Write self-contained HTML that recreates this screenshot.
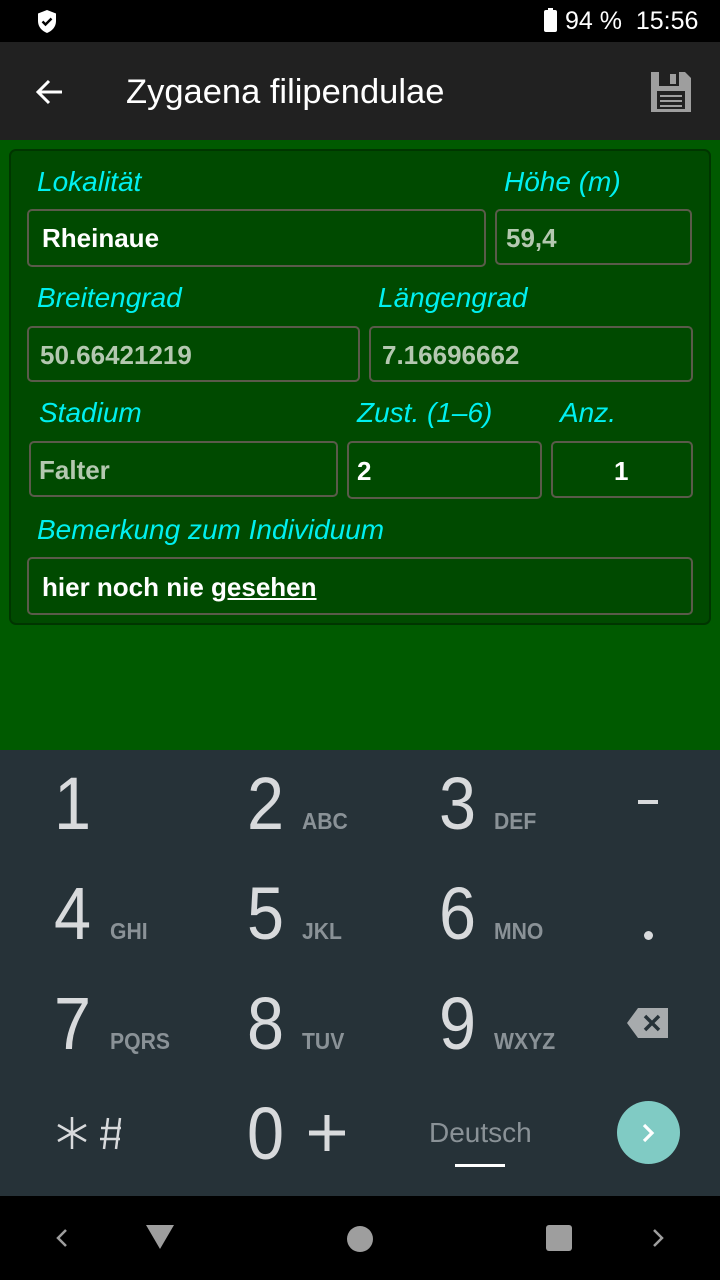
<!DOCTYPE html>
<html><head><meta charset="utf-8"><style>
*{margin:0;padding:0;box-sizing:border-box}
body{width:720px;height:1280px;position:relative;overflow:hidden;background:#005a00;font-family:"Liberation Sans",sans-serif}
.a{position:absolute;line-height:1;white-space:nowrap}
.lab{color:#00f0f0;font-style:italic;font-size:28px}
.box{position:absolute;border:2px solid #5a5a4a;border-radius:5px;background:#004a00}
.val{font-weight:bold;font-size:26px;color:#fff}
.g{color:#b4c8b0}
.d{color:#d8dadc;font-size:74px;transform-origin:left;transform:scaleX(.9)}
.l{color:#8a9297;font-size:23px;font-weight:bold;transform-origin:left;transform:scaleX(.92)}
</style></head><body>
<div class="a" style="left:0;top:0;width:720px;height:42px;background:#000"></div>
<svg class="a" style="left:36px;top:9px" width="22" height="25" viewBox="0 0 22 25"><path d="M11 1L2 4.5V12c0 6 4 10 9 12 5-2 9-6 9-12V4.5z" fill="#fff"/><path d="M6.5 12.5l3 3 6-6" stroke="#000" stroke-width="2.4" fill="none"/></svg>
<div class="a" style="left:544px;top:10px;width:13px;height:22px;background:#fff;border-radius:2px"></div>
<div class="a" style="left:548px;top:8px;width:5px;height:3px;background:#fff"></div>
<div class="a" style="left:565px;top:9px;color:#fff;font-size:25px">94 %&nbsp; 15:56</div>
<div class="a" style="left:0;top:42px;width:720px;height:98px;background:#212121"></div>
<svg class="a" style="left:34px;top:78px" width="30" height="28" viewBox="0 0 30 28"><path d="M28 14H4M15 3L4 14l11 11" stroke="#fff" stroke-width="3" fill="none"/></svg>
<div class="a" style="left:126px;top:75px;color:#fff;font-size:34.5px">Zygaena filipendulae</div>
<svg class="a" style="left:650px;top:71px" width="42" height="42" viewBox="0 0 42 42"><path d="M1 1h34l6 6v34H1z" fill="#9e9e9e"/><rect x="9" y="1" width="20" height="14" fill="#212121"/><rect x="20" y="3" width="6" height="10" fill="#9e9e9e"/><rect x="7" y="20" width="28" height="18" fill="#212121"/><path d="M10 25h22M10 30h22M10 35h22" stroke="#9e9e9e" stroke-width="2"/></svg>
<div class="a" style="left:9px;top:149px;width:702px;height:476px;background:#004a00;border:2px solid #003500;border-radius:7px"></div>
<div class="a lab" style="left:37px;top:168px">Lokalität</div>
<div class="a lab" style="left:504px;top:168px">Höhe (m)</div>
<div class="box" style="left:27px;top:209px;width:459px;height:58px"></div>
<div class="box" style="left:495px;top:209px;width:197px;height:56px"></div>
<div class="a val" style="left:42px;top:225px">Rheinaue</div>
<div class="a val g" style="left:506px;top:225px">59,4</div>
<div class="a lab" style="left:37px;top:284px">Breitengrad</div>
<div class="a lab" style="left:378px;top:284px">Längengrad</div>
<div class="box" style="left:27px;top:326px;width:333px;height:56px"></div>
<div class="box" style="left:369px;top:326px;width:324px;height:56px"></div>
<div class="a val g" style="left:40px;top:342px">50.66421219</div>
<div class="a val g" style="left:382px;top:342px">7.16696662</div>
<div class="a lab" style="left:39px;top:399px">Stadium</div>
<div class="a lab" style="left:357px;top:399px">Zust. (1–6)</div>
<div class="a lab" style="left:560px;top:399px">Anz.</div>
<div class="box" style="left:29px;top:441px;width:309px;height:56px"></div>
<div class="box" style="left:347px;top:441px;width:195px;height:58px"></div>
<div class="box" style="left:551px;top:441px;width:142px;height:57px"></div>
<div class="a val g" style="left:39px;top:457px">Falter</div>
<div class="a val" style="left:357px;top:458px">2</div>
<div class="a val" style="left:614px;top:458px">1</div>
<div class="a lab" style="left:37px;top:516px">Bemerkung zum Individuum</div>
<div class="box" style="left:27px;top:557px;width:666px;height:58px"></div>
<div class="a val" style="left:42px;top:574px">hier noch nie <u>gesehen</u></div>
<div class="a" style="left:0;top:750px;width:720px;height:446px;background:#263238"></div>
<div class="a d" style="left:54px;top:767px">1</div>
<div class="a d" style="left:247px;top:767px">2</div><div class="a l" style="left:302px;top:810px">ABC</div>
<div class="a d" style="left:439px;top:767px">3</div><div class="a l" style="left:494px;top:810px">DEF</div>
<div class="a" style="left:638px;top:800px;width:20px;height:4px;background:#d8dadc"></div>
<div class="a d" style="left:54px;top:877px">4</div><div class="a l" style="left:110px;top:920px">GHI</div>
<div class="a d" style="left:247px;top:877px">5</div><div class="a l" style="left:302px;top:920px">JKL</div>
<div class="a d" style="left:439px;top:877px">6</div><div class="a l" style="left:494px;top:920px">MNO</div>
<div class="a" style="left:644px;top:931px;width:9px;height:9px;border-radius:50%;background:#d8dadc"></div>
<div class="a d" style="left:54px;top:987px">7</div><div class="a l" style="left:110px;top:1030px">PQRS</div>
<div class="a d" style="left:247px;top:987px">8</div><div class="a l" style="left:302px;top:1030px">TUV</div>
<div class="a d" style="left:439px;top:987px">9</div><div class="a l" style="left:494px;top:1030px">WXYZ</div>
<svg class="a" style="left:626px;top:1007px" width="44" height="32" viewBox="0 0 44 32"><path d="M12 1h30v30H12L1 16z" fill="#a7abad"/><path d="M19 9l14 14M33 9L19 23" stroke="#263238" stroke-width="3.5"/></svg>
<svg class="a" style="left:56px;top:1115px" width="80" height="36" viewBox="0 0 80 36"><g stroke="#d8dadc" stroke-width="2.5" fill="none"><path d="M16 2v32M2 10l28 16M2 26l28-16"/><path d="M52 3l-4 31M64 3l-4 31M45 13h20M44 24h20"/></g></svg>
<div class="a d" style="left:247px;top:1097px">0</div>
<svg class="a" style="left:308px;top:1114px" width="38" height="38" viewBox="0 0 38 38"><path d="M19 1v36M1 19h36" stroke="#d8dadc" stroke-width="5"/></svg>
<div class="a" style="left:429px;top:1119px;color:#8a9297;font-size:28px">Deutsch</div>
<div class="a" style="left:455px;top:1164px;width:50px;height:3px;background:#fff"></div>
<div class="a" style="left:617px;top:1101px;width:63px;height:63px;border-radius:50%;background:#80cbc4"></div>
<svg class="a" style="left:638px;top:1122px" width="20" height="22" viewBox="0 0 20 22"><path d="M6 3l8 8-8 8" stroke="#fff" stroke-width="3.2" fill="none"/></svg>
<div class="a" style="left:0;top:1196px;width:720px;height:84px;background:#000"></div>
<svg class="a" style="left:54px;top:1228px" width="16" height="20" viewBox="0 0 16 20"><path d="M12 2L4 10l8 8" stroke="#9e9e9e" stroke-width="2.5" fill="none"/></svg>
<svg class="a" style="left:145px;top:1224px" width="30" height="26" viewBox="0 0 30 26"><path d="M1 1h28L15 25z" fill="#9e9e9e"/></svg>
<div class="a" style="left:347px;top:1226px;width:26px;height:26px;border-radius:50%;background:#9e9e9e"></div>
<div class="a" style="left:546px;top:1225px;width:26px;height:26px;border-radius:3px;background:#9e9e9e"></div>
<svg class="a" style="left:650px;top:1228px" width="16" height="20" viewBox="0 0 16 20"><path d="M4 2l8 8-8 8" stroke="#9e9e9e" stroke-width="2.5" fill="none"/></svg>
</body></html>
